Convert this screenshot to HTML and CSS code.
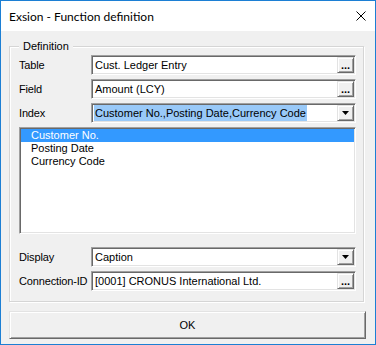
FILE: index.html
```html
<!DOCTYPE html>
<html>
<head>
<meta charset="utf-8">
<link rel="stylesheet" href="styles.css">
</head>
<body>
<div class="window">
  <div class="titlebar">
    <span class="title">Exsion - Function definition</span>
    <svg class="close" width="10" height="10" viewBox="0 0 10 10"><path d="M0.5 0.5 L9.5 9.5 M9.5 0.5 L0.5 9.5" stroke="#000" stroke-width="1" fill="none"/></svg>
  </div>
  <div class="body">
    <fieldset class="group">
      <legend>Definition</legend>
      <div class="row">
        <label>Table</label>
        <div class="field"><span class="val">Cust. Ledger Entry</span><span class="btn dots">...</span></div>
      </div>
      <div class="row">
        <label>Field</label>
        <div class="field"><span class="val">Amount (LCY)</span><span class="btn dots">...</span></div>
      </div>
      <div class="row">
        <label>Index</label>
        <div class="field"><span class="val"><span class="selected">Customer No.,Posting Date,Currency Code</span></span><span class="btn drop"><svg width="7" height="4" viewBox="0 0 7 4"><path d="M0 0 H7 L3.5 4 Z" fill="#000"/></svg></span></div>
      </div>
      <div class="listbox">
        <div class="item sel">Customer No.</div>
        <div class="item">Posting Date</div>
        <div class="item">Currency Code</div>
      </div>
      <div class="row">
        <label>Display</label>
        <div class="field"><span class="val">Caption</span><span class="btn drop"><svg width="7" height="4" viewBox="0 0 7 4"><path d="M0 0 H7 L3.5 4 Z" fill="#000"/></svg></span></div>
      </div>
      <div class="row last">
        <label>Connection-ID</label>
        <div class="field"><span class="val">[0001] CRONUS International Ltd.</span><span class="btn dots">...</span></div>
      </div>
    </fieldset>
    <button class="ok">OK</button>
  </div>
</div>
</body>
</html>
```
FILE: styles.css
```css
* { box-sizing: border-box; }
html, body { margin: 0; padding: 0; }
body {
  width: 376px;
  height: 345px;
  background: #fff;
  font-family: "Liberation Sans", Arial, sans-serif;
  font-size: 11px;
  color: #000;
}
.window {
  width: 376px;
  height: 345px;
  border: 1px solid #1c7fd4;
  display: flex;
  flex-direction: column;
}
.titlebar {
  height: 30px;
  flex: none;
  background: #fff;
  display: flex;
  align-items: center;
  justify-content: space-between;
  padding: 0 9px 0 8px;
}
.title {
  font-family: Lato, "Noto Sans", sans-serif;
  font-size: 12px;
  color: #000;
}
.close { display: block; }
.body {
  flex: 1;
  background: #f0f0f0;
  padding: 9px 0 5px 8px;
  display: flex;
  flex-direction: column;
  align-items: flex-start;
}
.group {
  margin: 0;
  width: 355px;
  height: 262px;
  border: 1px solid #d5d5d5;
  box-shadow: inset 1px 1px #fff, 1px 1px #fff;
  padding: 2px 7px 10px 9px;
  min-width: 0;
}
.group legend {
  padding: 0 4px;
  margin: 0;
  height: 13px;
  line-height: 13px;
  background: #f0f0f0;
}
.row {
  display: flex;
  align-items: center;
  height: 20px;
  margin-bottom: 4px;
}
.row.last { margin-bottom: 0; }
.row label { width: 72px; flex: none; letter-spacing: -0.15px; }
.field {
  flex: 1;
  height: 20px;
  background: #fff;
  border: 1px solid;
  border-color: #a0a0a0 #fff #fff #a0a0a0;
  box-shadow: inset 1px 1px #696969, inset -1px -1px #e3e3e3;
  padding: 1px;
  display: flex;
  align-items: center;
}
.val {
  flex: 1;
  padding-left: 2px;
  white-space: nowrap;
  overflow: hidden;
  line-height: 16px;
}
.selected {
  background: #99c9f8;
  margin-left: -1px;
  padding: 0 1px;
  display: inline-block;
  line-height: 16px;
}
.btn {
  width: 17px;
  height: 16px;
  flex: none;
  background: #f0f0f0;
  border: 1px solid;
  border-color: #e3e3e3 #696969 #696969 #e3e3e3;
  box-shadow: inset 1px 1px #fff, inset -1px -1px #a0a0a0;
  display: flex;
  justify-content: center;
}
.btn.dots {
  font-weight: bold;
  font-size: 11px;
  line-height: 10px;
  align-items: flex-end;
  padding-bottom: 2px;
  letter-spacing: 0;
}
.btn.drop { align-items: center; }
.btn.drop svg { display: block; }
.listbox {
  height: 107px;
  margin-bottom: 13px;
  background: #fff;
  border: 1px solid;
  border-color: #a0a0a0 #fff #fff #a0a0a0;
  box-shadow: inset 1px 1px #696969, inset -1px -1px #e3e3e3;
  padding: 1px;
}
.item {
  height: 13px;
  line-height: 13px;
  padding-left: 10px;
}
.item.sel {
  background: #3399ff;
  color: #fff;
}
.ok {
  margin: 9px 0 0 0;
  width: 357px;
  height: 28px;
  background: #f0f0f0;
  border: 1px solid;
  border-color: #e3e3e3 #696969 #696969 #e3e3e3;
  box-shadow: inset 1px 1px #fff, inset -1px -1px #a0a0a0;
  font-family: "Liberation Sans", Arial, sans-serif;
  font-size: 11px;
  color: #000;
  padding: 0;
}
```
